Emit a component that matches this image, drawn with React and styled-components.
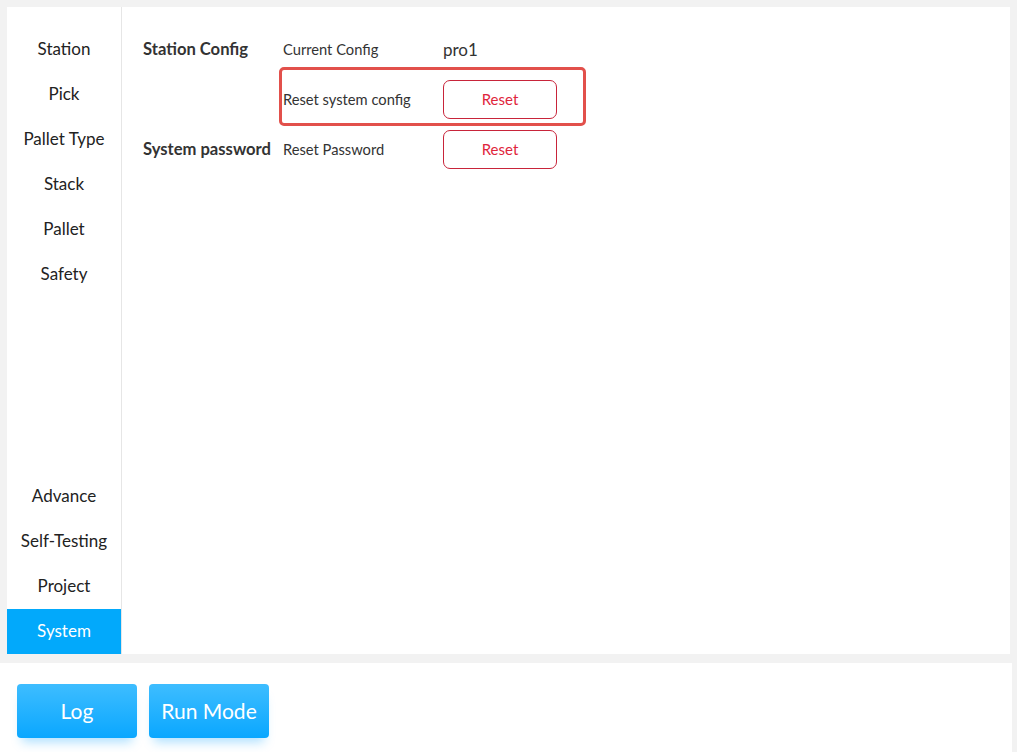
import React from 'react';
import styled, { createGlobalStyle } from 'styled-components';

const Global = createGlobalStyle`
	html, body {
		margin: 0;
		padding: 0;
		background: #ffffff;
		font-family: 'Lato', 'Noto Sans', sans-serif;
	}
`;

const topItems = ['Station', 'Pick', 'Pallet Type', 'Stack', 'Pallet', 'Safety'];
const bottomItems = ['Advance', 'Self-Testing', 'Project', 'System'];

function App() {
	return (
		<Page>
			<Global />
			<Top>
				<Panel>
					<Sidebar>
						<NavGroup>
							{topItems.map((t) => (
								<NavItem key={t}>{t}</NavItem>
							))}
						</NavGroup>
						<NavGroup>
							{bottomItems.map((t) => (
								<NavItem key={t} active={t === 'System'}>
									{t}
								</NavItem>
							))}
						</NavGroup>
					</Sidebar>
					<Content>
						<Section>
							<SectionTitle>Station Config</SectionTitle>
							<Rows>
								<Row>
									<Label>Current Config</Label>
									<Value>pro1</Value>
								</Row>
								<Row highlighted>
									<Label>Reset system config</Label>
									<ResetButton>Reset</ResetButton>
								</Row>
							</Rows>
						</Section>
						<Section>
							<SectionTitle>System password</SectionTitle>
							<Rows>
								<Row>
									<Label>Reset Password</Label>
									<ResetButton>Reset</ResetButton>
								</Row>
							</Rows>
						</Section>
					</Content>
				</Panel>
			</Top>
			<Footer>
				<BlueButton>Log</BlueButton>
				<BlueButton>Run Mode</BlueButton>
			</Footer>
		</Page>
	);
}

const Page = styled.div`
	width: 1017px;
	height: 752px;
	display: flex;
	flex-direction: column;
	background: #f2f2f2;
	overflow: hidden;
`;

const Top = styled.div`
	padding: 7px 7px 9px 7px;
	height: 647px;
	box-sizing: content-box;
`;

const Panel = styled.div`
	background: #ffffff;
	height: 100%;
	display: flex;
`;

const Sidebar = styled.div`
	width: 114px;
	border-right: 1px solid #e6e6e6;
	display: flex;
	flex-direction: column;
	justify-content: space-between;
	padding-top: 20px;
`;

const NavGroup = styled.div`
	display: flex;
	flex-direction: column;
`;

const NavItem = styled.div`
	height: 45px;
	box-sizing: border-box;
	padding-bottom: 2px;
	display: flex;
	align-items: center;
	justify-content: center;
	font-size: 17px;
	color: ${(p) => (p.active ? '#ffffff' : '#222222')};
	background: ${(p) => (p.active ? '#02a9fb' : 'transparent')};
`;

const Content = styled.div`
	flex: 1;
	padding: 17px 0 0 21px;
	display: flex;
	flex-direction: column;
`;

const Section = styled.div`
	display: flex;
	align-items: flex-start;
`;

const SectionTitle = styled.div`
	width: 140px;
	height: 50px;
	line-height: 50px;
	font-size: 16.6px;
	font-weight: 700;
	color: #333333;
	white-space: nowrap;
`;

const Rows = styled.div`
	display: flex;
	flex-direction: column;
`;

const Row = styled.div`
	position: relative;
	height: 50px;
	display: flex;
	align-items: center;

	&::after {
		content: '';
		display: ${(p) => (p.highlighted ? 'block' : 'none')};
		position: absolute;
		top: -7px;
		bottom: -2px;
		left: -4px;
		right: -29px;
		border: 3px solid #e2504b;
		border-radius: 5px;
		pointer-events: none;
	}
`;

const Label = styled.div`
	width: 160px;
	font-size: 14.7px;
	color: #333333;
`;

const Value = styled.div`
	font-size: 17px;
	color: #333333;
`;

const ResetButton = styled.button`
	width: 114px;
	height: 39px;
	padding-bottom: 2px;
	border: 1px solid #c8243a;
	border-radius: 7px;
	background: #ffffff;
	color: #e0253c;
	font-family: inherit;
	font-size: 15px;
	cursor: pointer;
`;

const Footer = styled.div`
	flex: 1;
	background: #ffffff;
	margin-right: 5px;
	display: flex;
	gap: 12px;
	padding: 21px 0 0 17px;
	align-items: flex-start;
`;

const BlueButton = styled.button`
	width: 120px;
	height: 54px;
	padding-bottom: 2px;
	border: none;
	border-radius: 4px;
	background: linear-gradient(to bottom, #3ebdff 0%, #0aa7ff 100%);
	color: #ffffff;
	font-family: inherit;
	font-size: 21px;
	box-shadow: 0 9px 10px -5px rgba(20, 165, 255, 0.35);
	cursor: pointer;
`;

export default App;
